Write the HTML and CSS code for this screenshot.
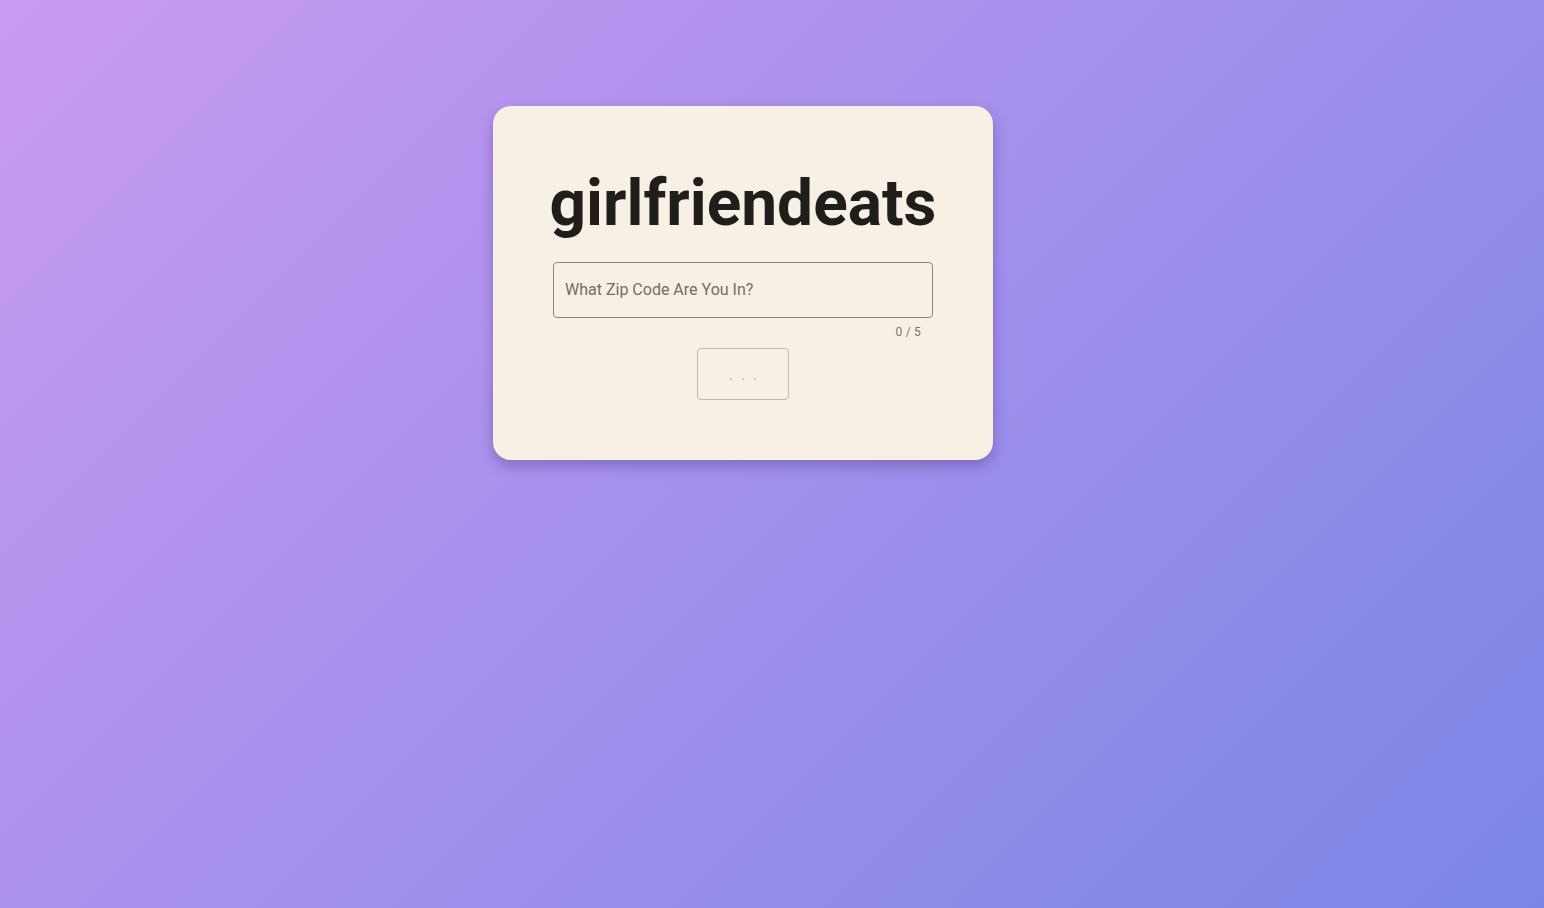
FILE: index.html
```html
<!DOCTYPE html>
<html lang="en">
<head>
<meta charset="utf-8">
<title>girlfriendeats</title>
<link rel="stylesheet" href="styles.css">
</head>
<body>
<main class="page">
  <section class="card">
    <h1 class="title">girlfriendeats</h1>
    <div class="field">
      <input class="zip" type="text" maxlength="5" placeholder="What Zip Code Are You In?">
      <div class="counter">0 / 5</div>
    </div>
    <button class="submit" type="button" disabled><span class="dots">. . .</span></button>
  </section>
</main>
</body>
</html>
```
FILE: styles.css
```css
html, body {
  margin: 0;
  padding: 0;
  height: 100%;
}
body {
  background: linear-gradient(135deg, #c99af1 0%, #a290ec 50%, #7a86e6 100%);
  font-family: Roboto, "Liberation Sans", sans-serif;
}
.page {
  display: flex;
  padding: 106px 0 0 493px;
}
.card {
  width: 500px;
  box-sizing: border-box;
  padding: 60px 60px 60px;
  background: #f8f0e4;
  border-radius: 18px;
  box-shadow: 0 6px 14px rgba(60, 40, 120, 0.35);
  display: flex;
  flex-direction: column;
  align-items: center;
}
.title {
  margin: 0;
  font-size: 64px;
  font-weight: 700;
  line-height: 76px;
  color: #201e1b;
}
.field {
  margin-top: 20px;
  width: 380px;
  display: flex;
  flex-direction: column;
}
.zip {
  box-sizing: border-box;
  width: 100%;
  height: 56px;
  border: 1px solid #8c8680;
  border-radius: 4px;
  background: transparent;
  padding: 0 11px 2px;
  font-family: Roboto, "Liberation Sans", sans-serif;
  font-size: 16px;
  color: #333;
  outline: none;
}
.zip::placeholder {
  color: #726d67;
}
.counter {
  align-self: flex-end;
  margin: 6px 12px 0 0;
  font-size: 12px;
  line-height: 16px;
  color: #7a756f;
  letter-spacing: 0.2px;
}
.submit {
  margin-top: 8px;
  width: 92px;
  height: 52px;
  border: 1px solid #c2b9ad;
  border-radius: 4px;
  background: transparent;
  display: flex;
  align-items: center;
  justify-content: center;
  padding: 0;
}
.dots {
  font-family: Roboto, "Liberation Sans", sans-serif;
  font-size: 16px;
  color: #b9b1a6;
  letter-spacing: 2px;
  margin-right: -2px;
}
```
